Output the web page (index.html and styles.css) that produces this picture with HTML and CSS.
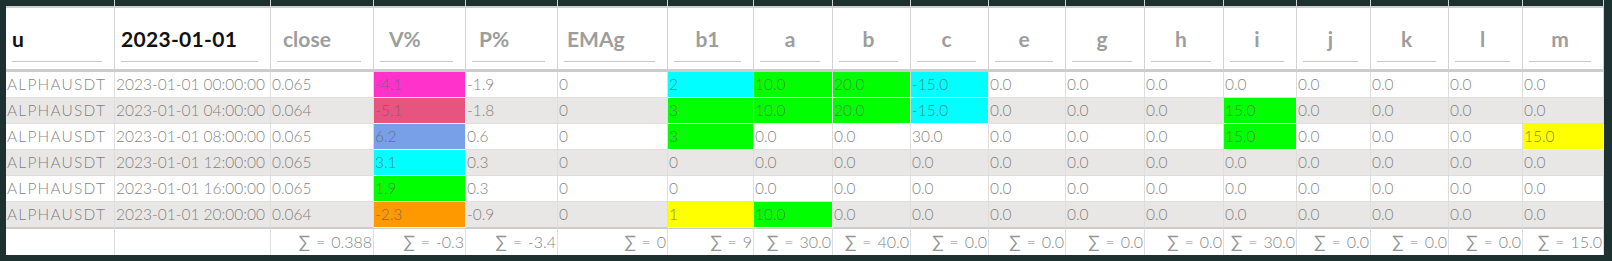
FILE: index.html
```html
<!DOCTYPE html>
<html>
<head>
<meta charset="utf-8">
<link rel="stylesheet" href="styles.css">
</head>
<body>
<div class="frame">
  <div class="grid">
    <div class="th"><div class="inp val">u</div></div>
    <div class="th"><div class="inp val">2023-01-01</div></div>
    <div class="th"><div class="inp ph p6">close</div></div>
    <div class="th"><div class="inp ph p9">V%</div></div>
    <div class="th"><div class="inp ph p7">P%</div></div>
    <div class="th"><div class="inp ph p3">EMAg</div></div>
    <div class="th"><div class="inp ph ctr">b1</div></div>
    <div class="th"><div class="inp ph ctr">a</div></div>
    <div class="th"><div class="inp ph ctr">b</div></div>
    <div class="th"><div class="inp ph ctr">c</div></div>
    <div class="th"><div class="inp ph ctr">e</div></div>
    <div class="th"><div class="inp ph ctr">g</div></div>
    <div class="th"><div class="inp ph ctr">h</div></div>
    <div class="th"><div class="inp ph ctr">i</div></div>
    <div class="th"><div class="inp ph ctr">j</div></div>
    <div class="th"><div class="inp ph ctr">k</div></div>
    <div class="th"><div class="inp ph ctr">l</div></div>
    <div class="th"><div class="inp ph ctr">m</div></div>

    <div class="td sym">ALPHAUSDT</div><div class="td">2023-01-01 00:00:00</div><div class="td">0.065</div><div class="td magenta">-4.1</div><div class="td">-1.9</div><div class="td">0</div><div class="td cyan">2</div><div class="td green">10.0</div><div class="td green">20.0</div><div class="td cyan">-15.0</div><div class="td">0.0</div><div class="td">0.0</div><div class="td">0.0</div><div class="td">0.0</div><div class="td">0.0</div><div class="td">0.0</div><div class="td">0.0</div><div class="td">0.0</div>

    <div class="td alt sym">ALPHAUSDT</div><div class="td alt">2023-01-01 04:00:00</div><div class="td alt">0.064</div><div class="td alt rose">-5.1</div><div class="td alt">-1.8</div><div class="td alt">0</div><div class="td alt green">3</div><div class="td alt green">10.0</div><div class="td alt green">20.0</div><div class="td alt cyan">-15.0</div><div class="td alt">0.0</div><div class="td alt">0.0</div><div class="td alt">0.0</div><div class="td alt green">15.0</div><div class="td alt">0.0</div><div class="td alt">0.0</div><div class="td alt">0.0</div><div class="td alt">0.0</div>

    <div class="td sym">ALPHAUSDT</div><div class="td">2023-01-01 08:00:00</div><div class="td">0.065</div><div class="td blue">6.2</div><div class="td">0.6</div><div class="td">0</div><div class="td green">3</div><div class="td">0.0</div><div class="td">0.0</div><div class="td">30.0</div><div class="td">0.0</div><div class="td">0.0</div><div class="td">0.0</div><div class="td green">15.0</div><div class="td">0.0</div><div class="td">0.0</div><div class="td">0.0</div><div class="td yellow">15.0</div>

    <div class="td alt sym">ALPHAUSDT</div><div class="td alt">2023-01-01 12:00:00</div><div class="td alt">0.065</div><div class="td alt cyan">3.1</div><div class="td alt">0.3</div><div class="td alt">0</div><div class="td alt">0</div><div class="td alt">0.0</div><div class="td alt">0.0</div><div class="td alt">0.0</div><div class="td alt">0.0</div><div class="td alt">0.0</div><div class="td alt">0.0</div><div class="td alt">0.0</div><div class="td alt">0.0</div><div class="td alt">0.0</div><div class="td alt">0.0</div><div class="td alt">0.0</div>

    <div class="td sym">ALPHAUSDT</div><div class="td">2023-01-01 16:00:00</div><div class="td">0.065</div><div class="td green">1.9</div><div class="td">0.3</div><div class="td">0</div><div class="td">0</div><div class="td">0.0</div><div class="td">0.0</div><div class="td">0.0</div><div class="td">0.0</div><div class="td">0.0</div><div class="td">0.0</div><div class="td">0.0</div><div class="td">0.0</div><div class="td">0.0</div><div class="td">0.0</div><div class="td">0.0</div>

    <div class="td alt last sym">ALPHAUSDT</div><div class="td alt last">2023-01-01 20:00:00</div><div class="td alt last">0.064</div><div class="td alt last orange">-2.3</div><div class="td alt last">-0.9</div><div class="td alt last">0</div><div class="td alt last yellow">1</div><div class="td alt last green">10.0</div><div class="td alt last">0.0</div><div class="td alt last">0.0</div><div class="td alt last">0.0</div><div class="td alt last">0.0</div><div class="td alt last">0.0</div><div class="td alt last">0.0</div><div class="td alt last">0.0</div><div class="td alt last">0.0</div><div class="td alt last">0.0</div><div class="td alt last">0.0</div>

    <div class="tf"></div><div class="tf"></div><div class="tf"><span class="sig">∑</span> = 0.388</div><div class="tf"><span class="sig">∑</span> = -0.3</div><div class="tf"><span class="sig">∑</span> = -3.4</div><div class="tf"><span class="sig">∑</span> = 0</div><div class="tf"><span class="sig">∑</span> = 9</div><div class="tf"><span class="sig">∑</span> = 30.0</div><div class="tf"><span class="sig">∑</span> = 40.0</div><div class="tf"><span class="sig">∑</span> = 0.0</div><div class="tf"><span class="sig">∑</span> = 0.0</div><div class="tf"><span class="sig">∑</span> = 0.0</div><div class="tf"><span class="sig">∑</span> = 0.0</div><div class="tf"><span class="sig">∑</span> = 30.0</div><div class="tf"><span class="sig">∑</span> = 0.0</div><div class="tf"><span class="sig">∑</span> = 0.0</div><div class="tf"><span class="sig">∑</span> = 0.0</div><div class="tf"><span class="sig">∑</span> = 15.0</div>
  </div>
</div>
</body>
</html>
```
FILE: styles.css
```css
* { box-sizing: border-box; }
html, body { margin: 0; padding: 0; background: #1e3131; }
.frame {
  width: 1612px;
  height: 261px;
  padding: 0 0 6px 6px;
  background: #1e3131;
}
.grid {
  display: grid;
  grid-template-columns: 109px 156px 103px 92px 92px 110px 86px 79px 78px 78px 77px 79px 79px 73px 74px 78px 74px 81px;
  grid-template-rows: 72px repeat(6, 26px) 27px;
  width: 1598px;
  font-family: Lato, "DejaVu Sans", sans-serif;
}
.th {
  background: linear-gradient(to bottom, #1e3131 0, #1e3131 6px, #cfcfcf 6px, #cfcfcf 8px, #ffffff 8px);
  border-right: 1px solid #d2d2d2;
  border-bottom: 3px solid #cccccc;
  padding: 8px 12px 0 6px;
}
.inp {
  height: 54px;
  border-bottom: 1px solid #c8c8c8;
  padding-top: 18px;
  font-size: 21px;
  line-height: 25px;
  font-weight: 700;
  white-space: nowrap;
}
.val { color: #111111; letter-spacing: 0.3px; }
.ph { color: #9d9d9d; }
.p3 { padding-left: 3px; }
.p6 { padding-left: 6px; }
.p7 { padding-left: 7px; }
.p9 { padding-left: 9px; }
.ctr { text-align: center; }
.td {
  background: #ffffff;
  border-right: 1px solid #dedede;
  border-bottom: 1px solid #dedede;
  padding-left: 1px;
  font-size: 15.5px;
  font-weight: 300;
  line-height: 25px;
  color: rgba(100, 100, 100, 0.82);
  white-space: nowrap;
  overflow: hidden;
}
.td.sym { letter-spacing: 1.2px; }
.td.alt { background: #e9e7e5; }
.td.last { border-bottom-color: #cccccc; }
.td.magenta { background: #ff33cc; border-color: #f4f4f4; }
.td.rose { background: #e75480; border-color: #f4f4f4; }
.td.blue { background: #77a0e8; border-color: #f4f4f4; }
.td.cyan { background: #00ffff; border-color: #f4f4f4; }
.td.green { background: #00ff00; border-color: #f4f4f4; }
.td.orange { background: #ff9900; border-color: #f4f4f4; }
.td.yellow { background: #ffff00; border-color: #f4f4f4; }
.tf {
  background: #ffffff;
  border-top: 1px solid #cccccc;
  border-right: 1px solid #dedede;
  text-align: right;
  padding-right: 1px;
  font-size: 16px;
  font-weight: 300;
  line-height: 25px;
  word-spacing: 1.5px;
  color: rgba(100, 100, 100, 0.82);
  white-space: nowrap;
}
.sig { font-size: 17px; font-weight: 400; color: rgba(120, 120, 120, 0.8); }
```
